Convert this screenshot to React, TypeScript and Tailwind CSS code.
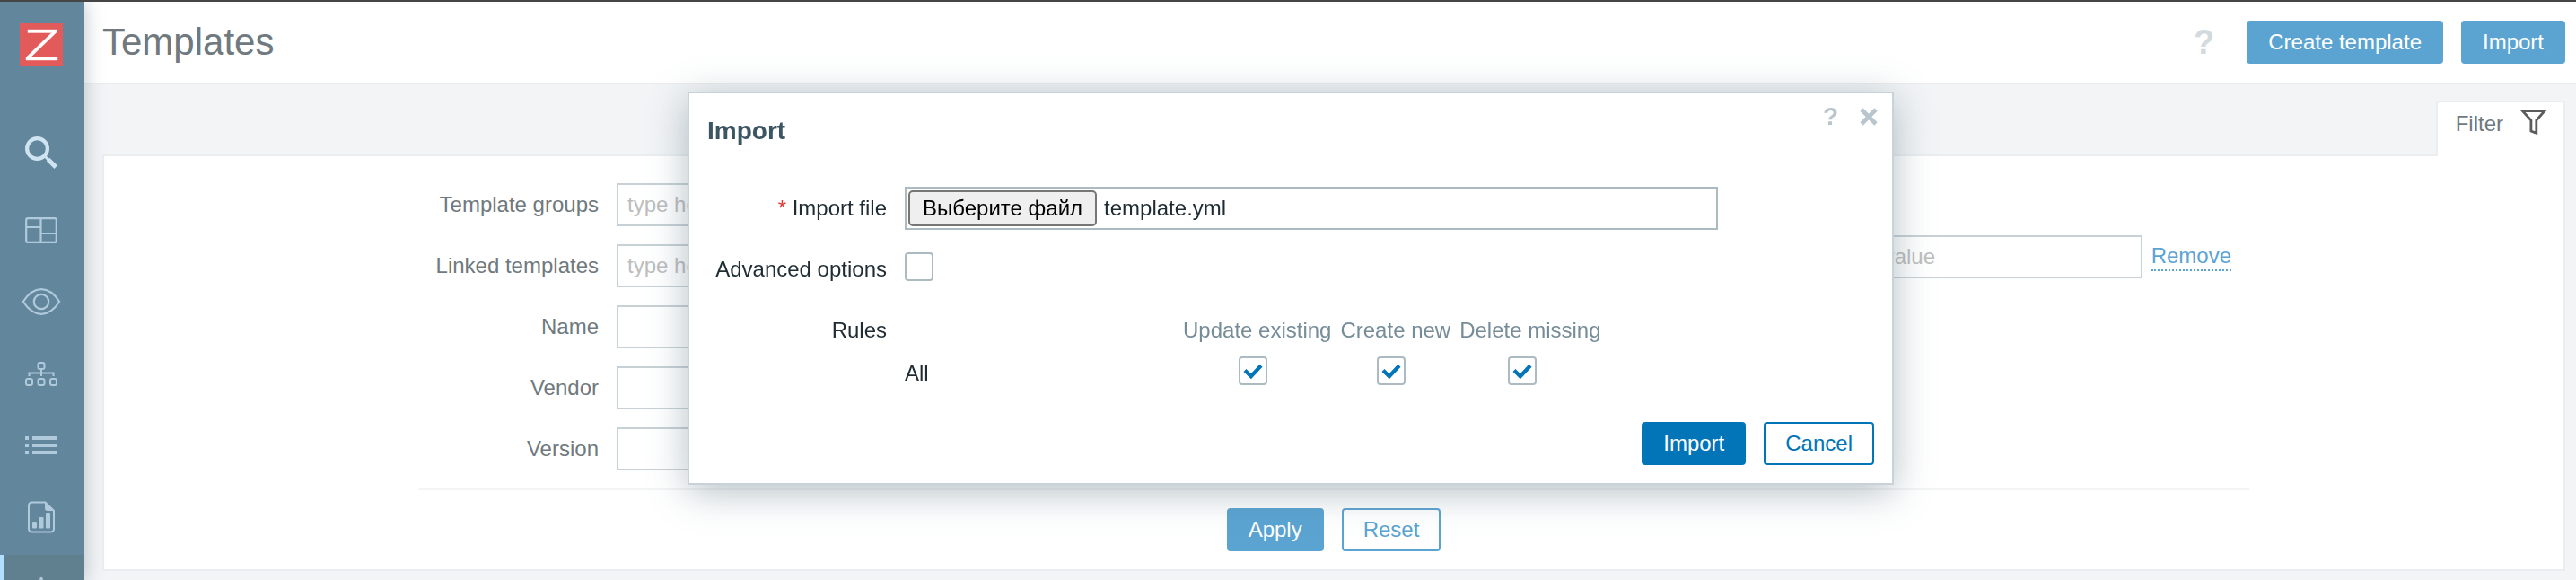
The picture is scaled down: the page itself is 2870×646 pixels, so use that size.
import { useState } from "react";
import type { ReactNode } from "react";

const primaryMuted =
  "h-12 rounded-[4px] border-2 border-[#5ba4d2] bg-[#5ba4d2] px-[22px] text-2xl leading-none text-white";

function NavItem({ label, active = false, children }: { label: string; active?: boolean; children: ReactNode }) {
  return (
    <a
      href="#"
      aria-label={label}
      className={
        active
          ? "flex h-[76px] shrink-0 items-center justify-center border-l-4 border-[#b0dfff] bg-[#608090] pr-[6px] text-[#b0cadb]"
          : "flex h-[76px] shrink-0 items-center justify-center pr-[2px] text-[#b0cadb]"
      }
    >
      {children}
    </a>
  );
}

function Sidebar() {
  return (
    <nav className="relative z-10 flex w-[94px] shrink-0 flex-col bg-[#62879d] pt-6 shadow-[0_0_20px_rgba(60,85,98,0.35)]">
      <a href="#" aria-label="Home" className="ml-[22px] block size-12">
        <svg viewBox="0 0 48 48" className="size-12">
          <rect width="48" height="48" fill="#e35a5a" />
          <path d="M9 7h32v3L12.500 37.500H42V41H7v-3L35.500 10.500H9z" fill="#fff" stroke="#fff" strokeWidth="0.4" />
        </svg>
      </a>
      <button type="button" aria-label="Search" className="mt-[78px] mb-[30px] ml-7 size-9 text-[#cfe3f1]">
        <svg viewBox="0 0 36 36" className="size-9" fill="none" stroke="currentColor">
          <circle cx="13.5" cy="13.5" r="11.4" strokeWidth="4.2" />
          <path d="M22.5 22.5l4 4" strokeWidth="3" />
          <path d="M25.5 25.5l8.8 8.6" strokeWidth="5" />
        </svg>
      </button>
      <div className="flex flex-col gap-1">
        <NavItem label="Dashboards">
          <svg viewBox="0 0 36 36" className="size-9" fill="none" stroke="currentColor" strokeWidth="2.2">
            <rect x="1.200" y="5.200" width="33.600" height="26.600" rx="1.5" />
            <path d="M17.500 5v27M1 15h16.500M17.500 22H35" />
          </svg>
        </NavItem>
        <NavItem label="Monitoring">
          <svg viewBox="0 0 44 36" className="h-9 w-11" fill="none" stroke="currentColor" strokeWidth="2.2">
            <path d="M1.800 18C7 10 14 4.200 22 4.200S37 10 42.200 18C37 26 30 31.800 22 31.800S7 26 1.800 18z" strokeLinejoin="round" />
            <circle cx="22" cy="18" r="8.200" />
          </svg>
        </NavItem>
        <NavItem label="Services">
          <svg viewBox="0 0 36 36" className="size-9" fill="none" stroke="currentColor" strokeWidth="2">
            <rect x="14.500" y="6" width="7" height="7" rx="2" />
            <rect x="1" y="24" width="7" height="7" rx="2" />
            <rect x="14.500" y="24" width="7" height="7" rx="2" />
            <rect x="28" y="24" width="7" height="7" rx="2" />
            <path d="M18 13v8M4.500 21v-3.500h27V21" />
          </svg>
        </NavItem>
        <NavItem label="Inventory">
          <svg viewBox="0 0 36 36" className="size-9" fill="currentColor">
            <path d="M0 8h4v4H0zM8 8h28v4H8zM0 16h4v4H0zM8 16h28v4H8zM0 24h4v4H0zM8 24h28v4H8z" />
          </svg>
        </NavItem>
        <NavItem label="Reports">
          <svg viewBox="0 0 36 36" className="size-9" fill="none" stroke="currentColor" strokeWidth="2">
            <path d="M22.500 1.500H7.500A3.500 3.500 0 0 0 4 5v26a3.500 3.500 0 0 0 3.500 3.500h21A3.500 3.500 0 0 0 32 31V11z" />
            <path d="M22 1.500l10 9.500h-7a3 3 0 0 1-3-3z" fill="currentColor" stroke="none" />
            <rect x="8" y="23" width="5" height="7.500" rx="1" fill="currentColor" stroke="none" />
            <rect x="15.500" y="18" width="5" height="12.500" rx="1" fill="currentColor" stroke="none" />
            <rect x="23" y="13" width="5" height="17.500" rx="1" fill="currentColor" stroke="none" />
          </svg>
        </NavItem>
        <NavItem label="Data collection" active>
          <svg viewBox="0 0 36 36" className="size-9" fill="none" stroke="currentColor" strokeWidth="3.500" strokeLinecap="round">
            <path d="M18 6.500v16M11 16l7 7 7-7M4 22v9h28v-9" />
          </svg>
        </NavItem>
      </div>
    </nav>
  );
}

const filterFields = [
  { id: "groups", label: "Template groups", placeholder: "type here to search" },
  { id: "linked", label: "Linked templates", placeholder: "type here to search" },
  { id: "name", label: "Name", placeholder: "" },
  { id: "vendor", label: "Vendor", placeholder: "" },
  { id: "version", label: "Version", placeholder: "" },
];

const filterInput =
  "h-12 border-2 border-[#c8d1d5] bg-white px-[10px] text-2xl text-[#6f797e] placeholder:text-[#bdbdbd]";

function FilterPanel() {
  return (
    <section className="px-5 pt-[18px] pr-3">
      <div className="relative -mb-[2px] flex justify-end">
        <a
          href="#"
          className="flex h-[62px] items-start gap-[18px] rounded-t-[4px] border-2 border-b-0 border-[#ebeef0] bg-white pt-2 pr-[17px] pl-5 text-2xl leading-8 text-[#6f797e]"
        >
          Filter
          <svg viewBox="0 0 32 32" className="size-8" fill="none" stroke="#5b5b5b" strokeWidth="2.800">
            <path d="M3.500 1.600h24.400L18.800 12v14.300l-5.900-2.300V12z" />
          </svg>
        </a>
      </div>
      <form className="border-2 border-[#ebeef0] bg-white pt-[30px] pb-5" onSubmit={(e) => e.preventDefault()}>
        <div className="mx-auto max-w-[2040px]">
          <div className="flex justify-between">
            <div className="flex flex-col gap-5">
              {filterFields.map((f) => (
                <div key={f.id} className="flex items-center gap-5">
                  <label htmlFor={f.id} className="w-[201px] text-right text-2xl text-[#6f797e]">
                    {f.label}
                  </label>
                  <input id={f.id} placeholder={f.placeholder} className={`${filterInput} w-[600px]`} />
                </div>
              ))}
            </div>
            <div className="flex items-start gap-[10px] pt-[58px] pr-5">
              <input aria-label="Tag value" placeholder="value" className={`${filterInput} w-[300px]`} />
              <button
                type="button"
                className="mt-2 border-b-2 border-dotted border-[#5ba4d2] text-2xl leading-[30px] text-[#5ba4d2]"
              >
                Remove
              </button>
            </div>
          </div>
          <div className="mt-5 flex justify-center gap-5 border-t-2 border-[#f3f4f5] pt-5">
            <button type="submit" className={primaryMuted}>
              Apply
            </button>
            <button
              type="reset"
              className="h-12 rounded-[4px] border-2 border-[#5ba4d2] bg-white px-[22px] text-2xl leading-none text-[#5ba4d2]"
            >
              Reset
            </button>
          </div>
        </div>
      </form>
    </section>
  );
}

function CheckBox({ id, label, initial }: { id: string; label?: string; initial: boolean }) {
  const [checked, setChecked] = useState(initial);
  return (
    <span className="mb-[6px] inline-grid size-8 align-middle">
      <input
        id={id}
        type="checkbox"
        aria-label={label}
        checked={checked}
        onChange={(e) => setChecked(e.target.checked)}
        className="col-start-1 row-start-1 size-8 appearance-none rounded-[4px] border-2 border-[#acbbc2] bg-white"
      />
      {checked && (
        <svg
          viewBox="0 0 32 32"
          className="pointer-events-none col-start-1 row-start-1 size-8"
          fill="none"
          stroke="#0275b8"
          strokeWidth="4.200"
        >
          <path d="M7 15.500l6.800 6.700L25 10.300" />
        </svg>
      )}
    </span>
  );
}

const rules = ["Update existing", "Create new", "Delete missing"];

function ImportDialog() {
  const [fileName, setFileName] = useState("template.yml");
  const rowLabel = "w-[200px] shrink-0 text-right leading-[48px]";
  return (
    <div className="fixed inset-0 z-20 flex items-start justify-center overflow-hidden pt-[102px] pl-[6px]">
      <div
        role="dialog"
        aria-labelledby="dialog-title"
        className="w-[1344px] border-2 border-[#c8d2d7] bg-white pb-5 text-2xl text-[#1f2c33] shadow-[0_8px_40px_rgba(90,115,128,0.45)]"
      >
        <div className="flex h-[104px] items-start justify-between pl-5">
          <h2 id="dialog-title" className="pt-6 text-[28px] leading-9 font-bold text-[#3c5563]">
            Import
          </h2>
          <div className="flex items-center gap-6 pt-[10px] pr-4 text-[#b9c5cc]">
            <a href="#" aria-label="Help" className="text-[28px] leading-8 font-bold">
              ?
            </a>
            <button type="button" aria-label="Close" className="size-5">
              <svg viewBox="0 0 20 20" className="size-5" stroke="currentColor" strokeWidth="4.600">
                <path d="M2 2l16 16M18 2L2 18" />
              </svg>
            </button>
          </div>
        </div>
        <div className="flex flex-col gap-5 pl-5">
          <div className="flex gap-5">
            <label htmlFor="import-file" className={rowLabel}>
              <span className="text-[#e33734]">*</span> Import file
            </label>
            <label
              htmlFor="import-file"
              className="flex h-12 w-[906px] items-center gap-2 border-2 border-[#acbbc2] px-[2px] focus-within:border-[#0275b8]"
            >
              <input
                id="import-file"
                type="file"
                className="sr-only"
                onChange={(e) => setFileName(e.target.files?.[0]?.name ?? fileName)}
              />
              <span className="h-10 rounded-[5px] border-2 border-[#767676] bg-[#efefef] px-[14px] leading-9 text-black">
                Выберите файл
              </span>
              <span>{fileName}</span>
            </label>
          </div>
          <div className="flex items-center gap-5">
            <label htmlFor="advanced" className={rowLabel}>
              Advanced options
            </label>
            <CheckBox id="advanced" initial={false} />
          </div>
          <div className="flex gap-5">
            <span className={rowLabel}>Rules</span>
            <table className="border-collapse">
              <thead>
                <tr className="h-12">
                  <td className="w-[300px] p-0" />
                  {rules.map((r) => (
                    <th key={r} scope="col" className="p-0 pl-[10px] font-normal whitespace-nowrap text-[#768d99]">
                      {r}
                    </th>
                  ))}
                </tr>
              </thead>
              <tbody>
                <tr className="h-12">
                  <th scope="row" className="p-0 text-left font-normal">
                    All
                  </th>
                  {rules.map((r) => (
                    <td key={r} className="p-0 leading-none last:pr-2">
                      <span className="flex justify-center">
                        <CheckBox id={r} label={r} initial />
                      </span>
                    </td>
                  ))}
                </tr>
              </tbody>
            </table>
          </div>
        </div>
        <div className="mt-[30px] flex justify-end gap-5 pr-5">
          <button type="button" className="h-12 rounded-[4px] border-2 border-[#0275b8] bg-[#0275b8] px-[22px] leading-none text-white">
            Import
          </button>
          <button type="button" className="h-12 rounded-[4px] border-2 border-[#0275b8] bg-white px-[22px] leading-none text-[#0275b8]">
            Cancel
          </button>
        </div>
      </div>
    </div>
  );
}

export default function App() {
  return (
    <div className="flex h-screen overflow-hidden border-t-2 border-[#454545] bg-[#f2f4f6] font-['Liberation_Sans',Arial,sans-serif]">
      <Sidebar />
      <main className="min-w-0 flex-1">
        <header className="flex h-[92px] items-center border-b-2 border-[#ebeef0] bg-white pr-3 pl-5">
          <h1 className="text-[42px] leading-none text-[#6f797e]">Templates</h1>
          <div className="ml-auto flex items-center gap-5">
            <a href="#" aria-label="Help" className="mr-4 text-[38px] leading-none font-bold text-[#d2dade]">
              ?
            </a>
            <button type="button" className={primaryMuted}>
              Create template
            </button>
            <button type="button" className={primaryMuted}>
              Import
            </button>
          </div>
        </header>
        <FilterPanel />
      </main>
      <ImportDialog />
    </div>
  );
}
